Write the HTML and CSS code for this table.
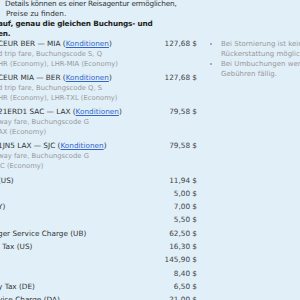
FILE: index.html
```html
<!DOCTYPE html>
<html lang="de">
<head>
<meta charset="utf-8">
<link rel="stylesheet" href="styles.css">
</head>
<body>
<div class="page">
  <div class="intro">
    <p class="lead"><span class="l1">Details können es einer Reisagentur ermöglichen,</span><br><span class="l2">Preise zu finden.</span></p>
    <p class="strong">auf, genau die gleichen Buchungs- und<br>en.</p>
  </div>
  <div class="main">
    <div class="fares">
      <div class="seg">
        <div class="seg-info">
          <div class="seg-title">CEUR BER — MIA (<a href="#">Konditionen</a>)</div>
          <div class="seg-sub">d trip fare, Buchungscode S, Q</div>
          <div class="seg-sub">HR (Economy), LHR-MIA (Economy)</div>
        </div>
        <div class="amount">127,68 $</div>
      </div>
      <div class="seg">
        <div class="seg-info">
          <div class="seg-title">CEUR MIA — BER (<a href="#">Konditionen</a>)</div>
          <div class="seg-sub">d trip fare, Buchungscode Q, S</div>
          <div class="seg-sub">HR (Economy), LHR-TXL (Economy)</div>
        </div>
        <div class="amount">127,68 $</div>
      </div>
      <div class="seg">
        <div class="seg-info">
          <div class="seg-title">21ERD1 SAC — LAX (<a href="#">Konditionen</a>)</div>
          <div class="seg-sub">way fare, Buchungscode G</div>
          <div class="seg-sub">AX (Economy)</div>
        </div>
        <div class="amount">79,58 $</div>
      </div>
      <div class="seg">
        <div class="seg-info">
          <div class="seg-title">1JN5 LAX — SJC (<a href="#">Konditionen</a>)</div>
          <div class="seg-sub">way fare, Buchungscode G</div>
          <div class="seg-sub">JC (Economy)</div>
        </div>
        <div class="amount">79,58 $</div>
      </div>
      <div class="taxes">
        <div class="tax"><span class="tax-label">(US)</span><span class="amount">11,94 $</span></div>
        <div class="tax"><span class="tax-label"></span><span class="amount">5,00 $</span></div>
        <div class="tax"><span class="tax-label">Y)</span><span class="amount">7,00 $</span></div>
        <div class="tax"><span class="tax-label"></span><span class="amount">5,50 $</span></div>
        <div class="tax"><span class="tax-label">ger Service Charge (UB)</span><span class="amount">62,50 $</span></div>
        <div class="tax"><span class="tax-label">l Tax (US)</span><span class="amount">16,30 $</span></div>
        <div class="tax"><span class="tax-label"></span><span class="amount">145,90 $</span></div>
        <div class="tax"><span class="tax-label"></span><span class="amount">8,40 $</span></div>
        <div class="tax"><span class="tax-label">y Tax (DE)</span><span class="amount">6,50 $</span></div>
        <div class="tax"><span class="tax-label">vice Charge (DA)</span><span class="amount">21,00 $</span></div>
      </div>
    </div>
    <ul class="notes">
      <li>Bei Stornierung ist keine<br>Rückerstattung möglich.</li>
      <li>Bei Umbuchungen werden<br>Gebühren fällig.</li>
    </ul>
  </div>
</div>
</body>
</html>
```
FILE: styles.css
```css
html, body {
  margin: 0;
  padding: 0;
  background: #e0eff8;
  overflow: hidden;
}
body {
  font-family: "DejaVu Sans", Verdana, sans-serif;
  font-size: 7.3px;
  line-height: 10px;
  color: #333;
}
.page {
  width: 340px;
  margin-left: -2px;
  margin-top: -1px;
}
.intro p {
  margin: 0;
}
.lead .l1 {
  padding-left: 7px;
  letter-spacing: -0.22px;
}
.lead .l2 {
  padding-left: 8px;
}
.strong {
  font-weight: bold;
  color: #222;
  letter-spacing: -0.15px;
}
.main {
  display: flex;
  align-items: flex-start;
}
.fares {
  width: 199px;
  flex: none;
}
.seg {
  display: flex;
  justify-content: space-between;
  align-items: flex-start;
  padding-bottom: 4px;
}
.seg-info {
  white-space: nowrap;
}
.seg-sub {
  font-size: 6.8px;
  color: #999;
}
.seg-title a {
  color: #3366cc;
  text-decoration: underline;
}
.amount {
  color: #444;
  white-space: nowrap;
}
.taxes {
  margin-top: -1.5px;
}
.tax {
  display: flex;
  justify-content: space-between;
  line-height: 13.3px;
}
.notes {
  margin: 0 0 0 8px;
  padding: 0 0 0 16px;
  width: 120px;
  flex: none;
  font-size: 7px;
  color: #999;
}
.notes li {
  line-height: 10px;
  white-space: nowrap;
}
```
